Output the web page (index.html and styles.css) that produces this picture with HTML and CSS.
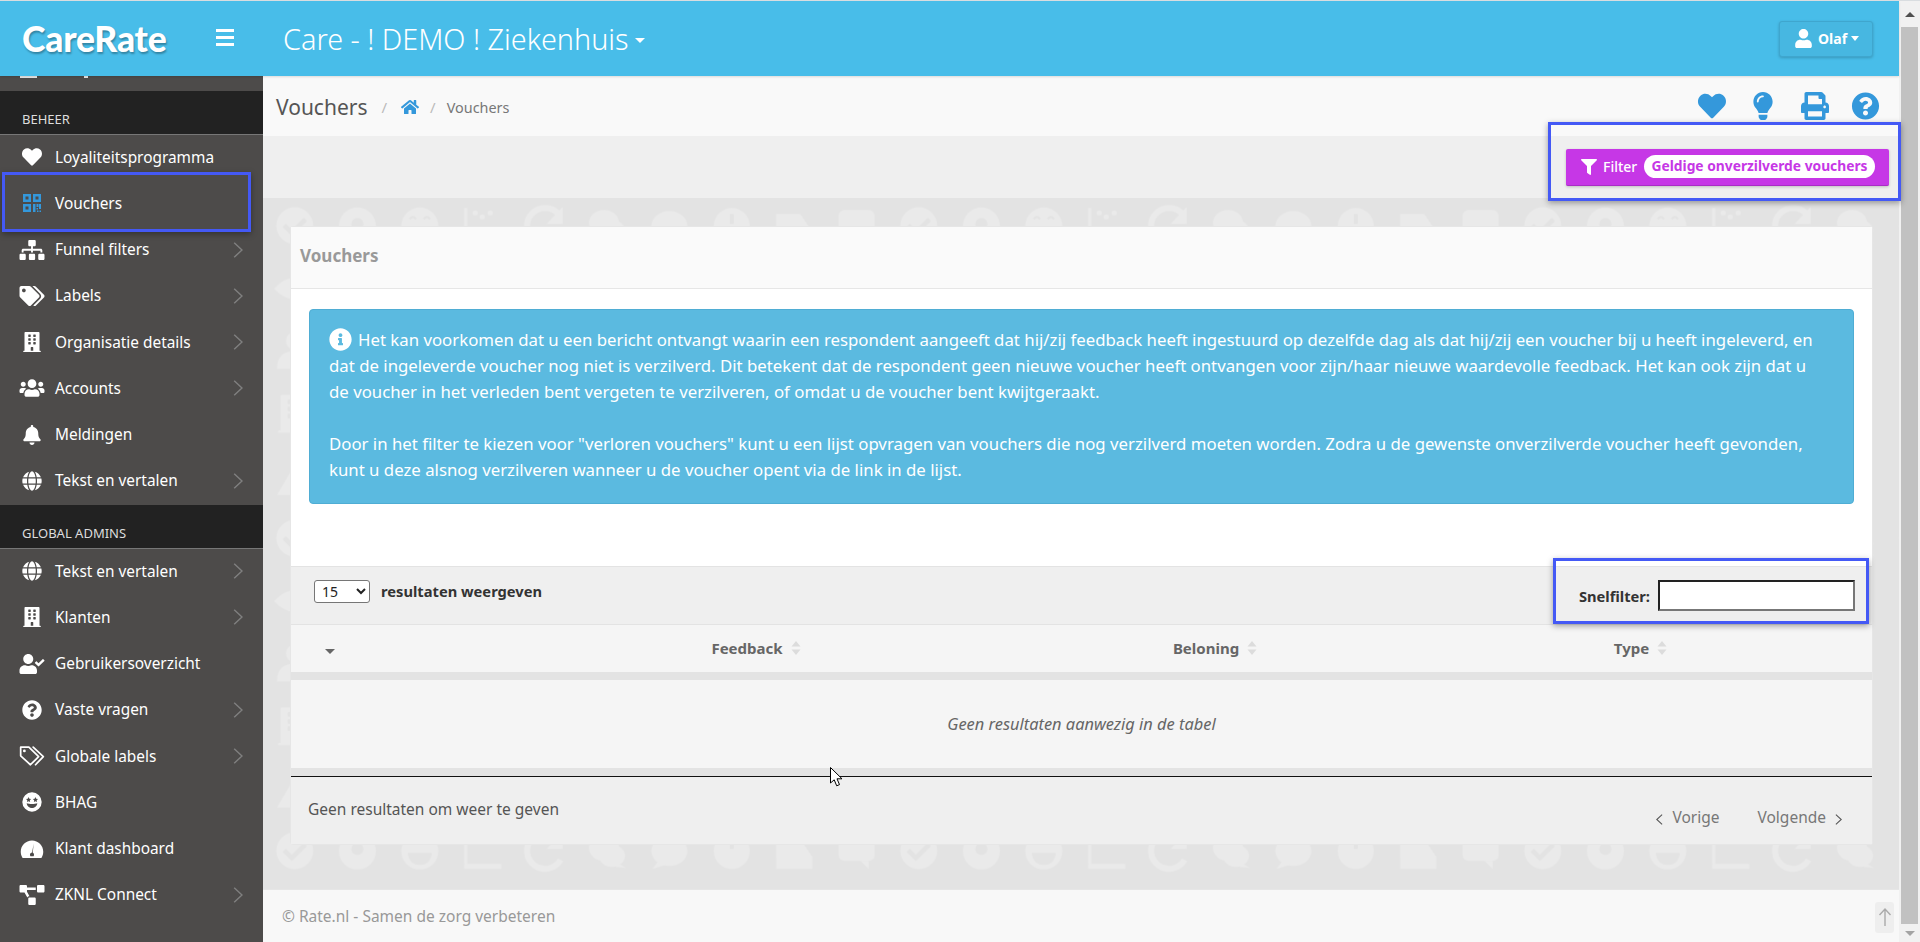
FILE: index.html
```html
<!DOCTYPE html>
<html lang="nl">
<head>
<meta charset="utf-8">
<title>Vouchers</title>
<link rel="stylesheet" href="styles.css">
</head>
<body>
<svg class="sprite" aria-hidden="true">
  <defs>
    <symbol id="i-heart" viewBox="0 0 512 512"><path d="M462.3 62.6C407.5 15.9 326 24.3 275.7 76.2L256 96.5l-19.7-20.3C186.1 24.3 104.5 15.9 49.7 62.6c-62.8 53.6-66.1 149.8-9.9 207.9l193.5 199.8c12.5 12.9 32.8 12.9 45.3 0l193.5-199.8c56.3-58.1 53-154.3-9.8-207.9z"/></symbol>
    <symbol id="i-user" viewBox="0 0 448 512"><path d="M224 256c70.7 0 128-57.3 128-128S294.7 0 224 0 96 57.3 96 128s57.3 128 128 128zm89.6 32h-16.7c-22.2 10.2-46.9 16-72.9 16s-50.6-5.8-72.9-16h-16.7C60.2 288 0 348.2 0 422.4V464c0 26.5 21.5 48 48 48h352c26.5 0 48-21.5 48-48v-41.6c0-74.2-60.2-134.4-134.4-134.4z"/></symbol>
    <symbol id="i-question" viewBox="0 0 512 512"><path d="M504 256c0 136.997-111.043 248-248 248S8 392.997 8 256C8 119.083 119.043 8 256 8s248 111.083 248 248zM262.655 90c-54.497 0-89.255 22.957-116.549 63.758-3.536 5.286-2.353 12.415 2.715 16.258l34.699 26.31c5.205 3.947 12.621 3.008 16.665-2.122 17.864-22.658 30.113-35.797 57.303-35.797 20.429 0 45.698 13.148 45.698 32.958 0 14.976-12.363 22.667-32.534 33.976C247.128 238.528 216 254.941 216 296v4c0 6.627 5.373 12 12 12h56c6.627 0 12-5.373 12-12v-1.333c0-28.462 83.186-29.647 83.186-106.667 0-58.002-60.165-102-116.531-102zM256 338c-25.365 0-46 20.635-46 46 0 25.364 20.635 46 46 46s46-20.636 46-46c0-25.365-20.635-46-46-46z"/></symbol>
    <symbol id="i-filter" viewBox="0 0 512 512"><path d="M487.976 0H24.028C2.71 0-8.047 25.866 7.058 40.971L192 225.941V432c0 7.831 3.821 15.17 10.237 19.662l80 55.98C298.02 518.69 320 507.493 320 487.98V225.941l184.947-184.97C520.021 25.896 509.338 0 487.976 0z"/></symbol>
    <symbol id="i-home" viewBox="0 0 576 512"><path d="M280.37 148.26L96 300.11V464a16 16 0 0 0 16 16l112.06-.29a16 16 0 0 0 15.92-16V368a16 16 0 0 1 16-16h64a16 16 0 0 1 16 16v95.64a16 16 0 0 0 16 16.05L464 480a16 16 0 0 0 16-16V300L295.67 148.26a12.19 12.19 0 0 0-15.3 0zM571.6 251.47L488 182.56V44.05a12 12 0 0 0-12-12h-56a12 12 0 0 0-12 12v72.61L318.47 43a48 48 0 0 0-61 0L4.34 251.47a12 12 0 0 0-1.6 16.9l25.5 31A12 12 0 0 0 45.15 301l235.22-193.74a12.19 12.19 0 0 1 15.3 0L530.9 301a12 12 0 0 0 16.9-1.6l25.5-31a12 12 0 0 0-1.7-16.93z"/></symbol>
    <symbol id="i-bulb" viewBox="0 0 352 512"><path d="M96.06 454.35c.01 6.29 1.87 12.45 5.36 17.69l17.09 25.69a31.99 31.99 0 0 0 26.64 14.28h61.71a31.99 31.99 0 0 0 26.64-14.28l17.09-25.69a31.989 31.989 0 0 0 5.36-17.69l.04-38.35H96.01l.05 38.35zM0 176c0 44.37 16.45 84.85 43.56 115.78 16.52 18.85 42.36 58.23 52.21 91.45.04.26.07.52.11.78h160.24c.04-.26.07-.51.11-.78 9.85-33.22 35.69-72.6 52.21-91.45C335.55 260.85 352 220.37 352 176 352 78.61 272.91-.3 175.45 0 73.44.31 0 82.97 0 176zm176-80c-44.11 0-80 35.89-80 80 0 8.84-7.16 16-16 16s-16-7.16-16-16c0-61.76 50.24-112 112-112 8.84 0 16 7.16 16 16s-7.16 16-16 16z"/></symbol>
    <symbol id="i-print" viewBox="0 0 512 512"><path d="M448 192V77.25c0-8.49-3.37-16.62-9.37-22.63L393.37 9.37c-6-6-14.14-9.37-22.63-9.37H96C78.33 0 64 14.33 64 32v160c-35.35 0-64 28.65-64 64v112c0 8.84 7.16 16 16 16h48v96c0 17.67 14.33 32 32 32h320c17.67 0 32-14.33 32-32v-96h48c8.84 0 16-7.16 16-16V256c0-35.35-28.65-64-64-64zm-64 256H128v-96h256v96zm0-224H128V64h192v48c0 8.84 7.16 16 16 16h48v96zm48 72c-13.25 0-24-10.75-24-24 0-13.26 10.75-24 24-24s24 10.74 24 24c0 13.25-10.75 24-24 24z"/></symbol>
    <symbol id="i-sitemap" viewBox="0 0 640 512"><path d="M128 352H32c-17.67 0-32 14.33-32 32v96c0 17.67 14.33 32 32 32h96c17.67 0 32-14.33 32-32v-96c0-17.67-14.33-32-32-32zm-24-80h192v48h48v-48h192v48h48v-57.59c0-21.17-17.23-38.41-38.41-38.41H344v-64h40c17.67 0 32-14.33 32-32V32c0-17.67-14.33-32-32-32H256c-17.67 0-32 14.33-32 32v96c0 17.67 14.33 32 32 32h40v64H94.41C73.23 224 56 241.23 56 262.41V320h48v-48zm264 80h-96c-17.67 0-32 14.33-32 32v96c0 17.67 14.33 32 32 32h96c17.67 0 32-14.33 32-32v-96c0-17.67-14.33-32-32-32zm240 0h-96c-17.67 0-32 14.33-32 32v96c0 17.67 14.33 32 32 32h96c17.67 0 32-14.33 32-32v-96c0-17.67-14.33-32-32-32z"/></symbol>
    <symbol id="i-tags" viewBox="0 0 640 512"><path d="M497.941 225.941L286.059 14.059A48 48 0 0 0 252.118 0H48C21.49 0 0 21.49 0 48v204.118a48 48 0 0 0 14.059 33.941l211.882 211.882c18.744 18.745 49.136 18.746 67.882 0l204.118-204.118c18.745-18.745 18.745-49.137 0-67.882zM112 160c-26.51 0-48-21.49-48-48s21.49-48 48-48 48 21.49 48 48-21.49 48-48 48zm513.941 133.823L421.823 497.941c-18.745 18.745-49.137 18.745-67.882 0l-.36-.36L527.64 323.522c16.999-16.999 26.36-39.6 26.36-63.64s-9.362-46.641-26.36-63.64L331.397 0h48.721a48 48 0 0 1 33.941 14.059l211.882 211.882c18.745 18.745 18.745 49.137 0 67.882z"/></symbol>
    <symbol id="i-tags-o" viewBox="0 0 640 512"><path fill="none" stroke="#fff" stroke-width="44" stroke-linejoin="round" d="M30 30h210l250 240-210 210L30 250z"/><circle cx="125" cy="125" r="36"/><path fill="none" stroke="#fff" stroke-width="44" stroke-linejoin="round" stroke-linecap="round" d="M350 30l260 240-200 210"/></symbol>
    <symbol id="i-building" viewBox="0 0 448 512"><path d="M436 480h-20V24c0-13.255-10.745-24-24-24H56C42.745 0 32 10.745 32 24v456H12c-6.627 0-12 5.373-12 12v20h448v-20c0-6.627-5.373-12-12-12zM128 76c0-6.627 5.373-12 12-12h40c6.627 0 12 5.373 12 12v40c0 6.627-5.373 12-12 12h-40c-6.627 0-12-5.373-12-12V76zm0 96c0-6.627 5.373-12 12-12h40c6.627 0 12 5.373 12 12v40c0 6.627-5.373 12-12 12h-40c-6.627 0-12-5.373-12-12v-40zm52 148h-40c-6.627 0-12-5.373-12-12v-40c0-6.627 5.373-12 12-12h40c6.627 0 12 5.373 12 12v40c0 6.627-5.373 12-12 12zm76 160h-64v-84c0-6.627 5.373-12 12-12h40c6.627 0 12 5.373 12 12v84zm64-172c0 6.627-5.373 12-12 12h-40c-6.627 0-12-5.373-12-12v-40c0-6.627 5.373-12 12-12h40c6.627 0 12 5.373 12 12v40zm0-96c0 6.627-5.373 12-12 12h-40c-6.627 0-12-5.373-12-12v-40c0-6.627 5.373-12 12-12h40c6.627 0 12 5.373 12 12v40zm0-96c0 6.627-5.373 12-12 12h-40c-6.627 0-12-5.373-12-12V76c0-6.627 5.373-12 12-12h40c6.627 0 12 5.373 12 12v40z"/></symbol>
    <symbol id="i-users" viewBox="0 0 640 512"><path d="M96 224c35.3 0 64-28.7 64-64s-28.7-64-64-64-64 28.7-64 64 28.7 64 64 64zm448 0c35.3 0 64-28.7 64-64s-28.7-64-64-64-64 28.7-64 64 28.7 64 64 64zm32 32h-64c-17.6 0-33.5 7.1-45.1 18.6 40.3 22.1 68.9 62 75.1 109.4h66c17.7 0 32-14.3 32-32v-32c0-35.3-28.7-64-64-64zm-256 0c61.9 0 112-50.1 112-112S381.9 32 320 32 208 82.1 208 144s50.1 112 112 112zm76.8 32h-8.3c-20.8 10-43.9 16-68.5 16s-47.6-6-68.5-16h-8.3C179.6 288 128 339.6 128 403.2V432c0 26.5 21.5 48 48 48h288c26.5 0 48-21.5 48-48v-28.8c0-63.6-51.6-115.2-115.2-115.2zm-223.7-13.4C161.5 263.1 145.6 256 128 256H64c-35.3 0-64 28.7-64 64v32c0 17.7 14.3 32 32 32h65.9c6.3-47.4 34.9-87.3 75.2-109.4z"/></symbol>
    <symbol id="i-bell" viewBox="0 0 448 512"><path d="M224 512c35.32 0 63.97-28.65 63.97-64H160.03c0 35.35 28.65 64 63.97 64zm215.39-149.71c-19.32-20.76-55.47-51.99-55.47-154.29 0-77.7-54.48-139.9-127.94-155.16V32c0-17.67-14.32-32-31.98-32s-31.98 14.33-31.98 32v20.84C118.56 68.1 64.08 130.3 64.08 208c0 102.3-36.15 133.53-55.47 154.29-6 6.45-8.66 14.16-8.61 21.71.11 16.4 12.98 32 32.1 32h383.8c19.12 0 32-15.6 32.1-32 .05-7.55-2.61-15.27-8.61-21.71z"/></symbol>
    <symbol id="i-globe" viewBox="0 0 496 512"><path d="M336.5 160C322 70.7 287.8 8 248 8s-74 62.7-88.5 152h177zM152 256c0 22.2 1.2 43.5 3.3 64h185.3c2.1-20.5 3.3-41.8 3.3-64s-1.2-43.5-3.3-64H155.3c-2.1 20.5-3.3 41.8-3.3 64zm324.7-96c-28.6-67.9-86.5-120.4-158-141.6 24.4 33.8 41.2 84.7 50 141.6h108zM177.2 18.4C105.8 39.6 47.8 92.1 19.3 160h108c8.7-56.9 25.5-107.8 49.9-141.6zM487.4 192H372.7c2.1 21 3.3 42.5 3.3 64s-1.2 43-3.3 64h114.6c5.5-20.5 8.6-41.8 8.6-64s-3.1-43.5-8.5-64zM120 256c0-21.5 1.2-43 3.3-64H8.6C3.2 212.5 0 233.8 0 256s3.2 43.5 8.6 64h114.6c-2-21-3.2-42.5-3.2-64zm39.5 96c14.5 89.3 48.7 152 88.5 152s74-62.7 88.5-152h-177zm159.3 141.6c71.4-21.2 129.4-73.7 158-141.6h-108c-8.8 56.9-25.6 107.8-50 141.6zM19.3 352c28.6 67.9 86.5 120.4 158 141.6-24.4-33.8-41.2-84.7-50-141.6h-108z"/></symbol>
    <symbol id="i-usercheck" viewBox="0 0 640 512"><path d="M224 256c70.7 0 128-57.3 128-128S294.7 0 224 0 96 57.3 96 128s57.3 128 128 128zm89.6 32h-16.7c-22.2 10.2-46.9 16-72.9 16s-50.6-5.8-72.9-16h-16.7C60.2 288 0 348.2 0 422.4V464c0 26.5 21.5 48 48 48h352c26.5 0 48-21.5 48-48v-41.6c0-74.2-60.2-134.4-134.4-134.4zm323-128.4l-27.8-28.1c-4.6-4.7-12.1-4.7-16.8-.1l-104.8 104-45.5-45.8c-4.6-4.7-12.1-4.7-16.8-.1l-28.1 27.9c-4.7 4.6-4.7 12.1-.1 16.8l81.7 82.3c4.6 4.7 12.1 4.7 16.8.1l141.3-140.2c4.6-4.7 4.7-12.2.1-16.8z"/></symbol>
    <symbol id="i-info" viewBox="0 0 512 512"><path d="M256 8C119.043 8 8 119.083 8 256c0 136.997 111.043 248 248 248s248-111.003 248-248C504 119.083 392.957 8 256 8zm0 110c23.196 0 42 18.804 42 42s-18.804 42-42 42-42-18.804-42-42 18.804-42 42-42zm56 254c0 6.627-5.373 12-12 12h-88c-6.627 0-12-5.373-12-12v-24c0-6.627 5.373-12 12-12h12v-64h-12c-6.627 0-12-5.373-12-12v-24c0-6.627 5.373-12 12-12h64c6.627 0 12 5.373 12 12v100h12c6.627 0 12 5.373 12 12v24z"/></symbol>
    <symbol id="i-diagram" viewBox="0 0 640 512"><path d="M384 320H256c-17.67 0-32 14.33-32 32v128c0 17.67 14.33 32 32 32h128c17.67 0 32-14.33 32-32V352c0-17.67-14.33-32-32-32zM192 32c0-17.67-14.33-32-32-32H32C14.33 0 0 14.33 0 32v128c0 17.67 14.33 32 32 32h95.72l73.16 128.04C211.98 300.98 232.4 288 256 288h.28L192 175.51V128h224V64H192V32zM608 0H480c-17.67 0-32 14.33-32 32v128c0 17.67 14.33 32 32 32h128c17.67 0 32-14.33 32-32V32c0-17.67-14.33-32-32-32z"/></symbol>
    <symbol id="i-check" viewBox="0 0 512 512"><path d="M504 256c0 136.967-111.033 248-248 248S8 392.967 8 256 119.033 8 256 8s248 111.033 248 248zM227.314 387.314l184-184c6.248-6.248 6.248-16.379 0-22.627l-22.627-22.627c-6.248-6.249-16.379-6.249-22.628 0L216 308.118l-70.059-70.059c-6.248-6.248-16.379-6.248-22.628 0l-22.627 22.627c-6.248 6.248-6.248 16.379 0 22.627l104 104c6.249 6.249 16.379 6.249 22.628.001z"/></symbol>
    <symbol id="i-stars" viewBox="0 0 512 512"><path fill-rule="evenodd" d="M256 8a248 248 0 1 0 0 496 248 248 0 0 0 0-496zM120 290c60 26 212 26 272 0-6 78-70 122-136 122s-130-44-136-122zM168 130l20 42 46 6-34 32 8 46-40-22-40 22 8-46-34-32 46-6zM344 130l20 42 46 6-34 32 8 46-40-22-40 22 8-46-34-32 46-6z"/></symbol>
    <symbol id="i-gauge" viewBox="0 0 576 512"><path fill-rule="evenodd" d="M288 40C129 40 0 169 0 328c0 53 14 102 39 144 6 10 16 16 28 16h442c12 0 22-6 28-16 25-42 39-91 39-144C576 169 447 40 288 40zM330 120l-22 230c20 10 32 30 32 52 0 14-4 27-12 38H248c-8-11-12-24-12-38 0-30 24-54 54-56z"/></symbol>
    <symbol id="i-qr" viewBox="0 0 18 18"><path fill-rule="evenodd" d="M0 0h8v8H0zM2.500 2.500v3h3v-3zM10 0h8v8h-8zM12.500 2.500v3h3v-3zM0 10h8v8H0zM2.500 12.500v3h3v-3zM10 10h2.500v8H10zM13.500 10h2v3h-2zM16 10h2v5h-2zM13.500 14H15v1.500h-1.500zM14 16.500h1.500V18H14zM16.500 16.500H18V18h-1.500z"/></symbol>
    <symbol id="i-chev" viewBox="0 0 10 16"><path fill="none" stroke="currentColor" stroke-width="1.5" d="M1.200 .8 9 8l-7.800 7.200"/></symbol>
    <symbol id="i-sort" viewBox="0 0 10 14"><path d="M5 0l4.500 5.400H.5zM5 14 .5 8.600h9z"/></symbol>
  </defs>
</svg>

<div class="window">
  <div class="page">
    <header class="topbar">
      <div class="brand"><span class="logo">CareRate</span></div>
      <span class="burger" aria-hidden="true"><i></i><i></i><i></i></span>
      <h1 class="org">Care - ! DEMO ! Ziekenhuis<span class="caret caret-org"></span></h1>
      <button class="user-btn" type="button"><svg class="ico-user"><use href="#i-user"/></svg>Olaf<span class="caret caret-user"></span></button>
    </header>
    <div class="below">
      <nav class="sidebar">
        <div class="peek"><i class="peek-a"></i><i class="peek-b"></i></div>
        <div class="side-title">BEHEER</div>
        <a class="item"><span class="ic"><svg class="w22"><use href="#i-heart"/></svg></span>Loyaliteitsprogramma</a>
        <a class="item"><span class="ic blue"><svg class="w18"><use href="#i-qr"/></svg></span>Vouchers</a>
        <a class="item"><span class="ic"><svg class="w26"><use href="#i-sitemap"/></svg></span>Funnel filters<svg class="chev"><use href="#i-chev"/></svg></a>
        <a class="item"><span class="ic"><svg class="w26"><use href="#i-tags"/></svg></span>Labels<svg class="chev"><use href="#i-chev"/></svg></a>
        <a class="item"><span class="ic"><svg class="w18"><use href="#i-building"/></svg></span>Organisatie details<svg class="chev"><use href="#i-chev"/></svg></a>
        <a class="item"><span class="ic"><svg class="w26"><use href="#i-users"/></svg></span>Accounts<svg class="chev"><use href="#i-chev"/></svg></a>
        <a class="item"><span class="ic"><svg class="w18"><use href="#i-bell"/></svg></span>Meldingen</a>
        <a class="item"><span class="ic"><svg class="w20"><use href="#i-globe"/></svg></span>Tekst en vertalen<svg class="chev"><use href="#i-chev"/></svg></a>
        <div class="side-title">GLOBAL ADMINS</div>
        <a class="item"><span class="ic"><svg class="w20"><use href="#i-globe"/></svg></span>Tekst en vertalen<svg class="chev"><use href="#i-chev"/></svg></a>
        <a class="item"><span class="ic"><svg class="w18"><use href="#i-building"/></svg></span>Klanten<svg class="chev"><use href="#i-chev"/></svg></a>
        <a class="item"><span class="ic"><svg class="w26"><use href="#i-usercheck"/></svg></span>Gebruikersoverzicht</a>
        <a class="item"><span class="ic"><svg class="w20"><use href="#i-question"/></svg></span>Vaste vragen<svg class="chev"><use href="#i-chev"/></svg></a>
        <a class="item"><span class="ic"><svg class="w26"><use href="#i-tags-o"/></svg></span>Globale labels<svg class="chev"><use href="#i-chev"/></svg></a>
        <a class="item"><span class="ic"><svg class="w20"><use href="#i-stars"/></svg></span>BHAG</a>
        <a class="item"><span class="ic"><svg class="w24"><use href="#i-gauge"/></svg></span>Klant dashboard</a>
        <a class="item"><span class="ic"><svg class="w26"><use href="#i-diagram"/></svg></span>ZKNL Connect<svg class="chev"><use href="#i-chev"/></svg></a>
      </nav>
      <main class="main">
        <div class="crumbs">
          <h2 class="crumb-title">Vouchers</h2>
          <span class="sep">/</span>
          <svg class="ico-home"><use href="#i-home"/></svg>
          <span class="sep sep-b">/</span>
          <span class="crumb-cur">Vouchers</span>
          <div class="tools">
            <svg class="t-heart"><use href="#i-heart"/></svg>
            <svg class="t-bulb"><use href="#i-bulb"/></svg>
            <svg class="t-print"><use href="#i-print"/></svg>
            <svg class="t-help"><use href="#i-question"/></svg>
          </div>
        </div>
        <div class="filterbar">
          <button class="filter-btn" type="button"><svg class="ico-filter"><use href="#i-filter"/></svg>Filter<span class="pill">Geldige onverzilverde vouchers</span></button>
        </div>
        <div class="content">
          <svg class="wall" aria-hidden="true">
            <defs>
              <pattern id="wall" x="0.8" y="-4.25" width="624" height="312.5" patternUnits="userSpaceOnUse">
                <g fill="#eaeaea">
                  <use href="#i-check" x="12" y="12" width="38" height="38"/>
                  <g transform="translate(93.6 31.25)"><circle r="18.5"/><circle cy="-2" r="6" fill="#e3e3e3"/></g>
                  <g transform="translate(156 31.25)"><circle r="18.5"/><path d="M-12 2h24c-1 9-6 12-12 12s-11-3-12-12z" fill="#e3e3e3"/><path d="M-10-7q3-4 6 0M4-7q3-4 6 0" fill="none" stroke="#e3e3e3" stroke-width="2"/></g>
                  <g transform="translate(218.4 31.25)"><path d="M-18-18h3v31h34v5h-37z"/><circle cx="-7" cy="-13" r="2.500"/><circle cx="0" cy="-9" r="2.500"/><circle cx="8" cy="-13" r="2.500"/></g>
                  <g transform="translate(280.8 31.25)"><path d="M14-12A18 18 0 1 0 16 9" fill="none" stroke="#eaeaea" stroke-width="6"/><path d="M18-19v17H2z"/></g>
                  <g transform="translate(343.2 31.25)"><ellipse cx="-3" cy="-3" rx="15" ry="13"/><ellipse cx="5" cy="5" rx="13" ry="11"/><path d="M10 12l9 5-10-1z"/></g>
                  <g transform="translate(405.6 31.25)"><ellipse rx="18" ry="15"/><path d="M-11 10l-6 8 13-4z"/></g>
                  <g transform="translate(468 31.25)"><circle r="18"/><path d="M-2-12h4v10h-4z" fill="#e3e3e3"/></g>
                  <g transform="translate(530.4 31.25)"><path d="M-18 18V-12h24l12 18v12z"/></g>
                  <g transform="translate(592.8 31.25)"><rect x="-18" y="-16" width="36" height="26" rx="6"/><path d="M4 10l8 8v-8z"/></g>
                  <g transform="translate(31.2 93.75)"><path d="M-21 0q21-22 42 0q-21 22-42 0z"/></g>
                  <g transform="translate(31.2 156.25)"><circle cy="-10" r="9"/><path d="M-18 18q0-18 18-18t18 18z"/></g>
                  <use href="#i-building" x="13" y="200" width="36" height="38"/>
                  <g transform="translate(31.2 281.25)"><path d="M-4-19h8v14l14 24h-36l14-24z"/></g>
                </g>
              </pattern>
            </defs>
            <rect class="wall-fill" fill="url(#wall)"/>
          </svg>
          <section class="card">
            <div class="card-head">Vouchers</div>
            <div class="card-body">
              <div class="alert">
                <p><svg class="ico-info"><use href="#i-info"/></svg>Het kan voorkomen dat u een bericht ontvangt waarin een respondent aangeeft dat hij/zij feedback heeft ingestuurd op dezelfde dag als dat hij/zij een voucher bij u heeft ingeleverd, en<br>dat de ingeleverde voucher nog niet is verzilverd. Dit betekent dat de respondent geen nieuwe voucher heeft ontvangen voor zijn/haar nieuwe waardevolle feedback. Het kan ook zijn dat u<br>de voucher in het verleden bent vergeten te verzilveren, of omdat u de voucher bent kwijtgeraakt.</p>
                <p>Door in het filter te kiezen voor "verloren vouchers" kunt u een lijst opvragen van vouchers die nog verzilverd moeten worden. Zodra u de gewenste onverzilverde voucher heeft gevonden,<br>kunt u deze alsnog verzilveren wanneer u de voucher opent via de link in de lijst.</p>
              </div>
            </div>
            <div class="tbl-tools">
              <label class="len"><select class="len-sel"><option>15</option></select>resultaten weergeven</label>
              <label class="quick">Snelfilter:<input class="quick-in" type="text"></label>
            </div>
            <div class="thead">
              <div class="th th-first"><span class="caret caret-th"></span></div>
              <div class="th">Feedback<svg class="sort"><use href="#i-sort"/></svg></div>
              <div class="th">Beloning<svg class="sort"><use href="#i-sort"/></svg></div>
              <div class="th">Type<svg class="sort"><use href="#i-sort"/></svg></div>
            </div>
            <div class="band"></div>
            <div class="empty">Geen resultaten aanwezig in de tabel</div>
            <div class="band band-end"></div>
            <div class="tbl-foot">
              <span class="tbl-info">Geen resultaten om weer te geven</span>
              <div class="pager">
                <span class="pg"><svg class="pg-chev flip"><use href="#i-chev"/></svg>Vorige</span>
                <span class="pg">Volgende<svg class="pg-chev"><use href="#i-chev"/></svg></span>
              </div>
            </div>
          </section>
        </div>
        <footer class="foot">
          <span>© Rate.nl - Samen de zorg verbeteren</span>
          <span class="totop" aria-hidden="true"><svg viewBox="0 0 14 20"><path fill="none" stroke="#aaa" stroke-width="1.4" d="M7 19V2M1.500 8 7 2l5.500 6"/></svg></span>
        </footer>
      </main>
    </div>
  </div>
  <div class="scroll" aria-hidden="true">
    <span class="s-up"></span>
    <span class="s-thumb"></span>
    <span class="s-down"></span>
  </div>
</div>

<div class="mark mark-a"></div>
<div class="mark mark-b"></div>
<div class="mark mark-c"></div>
<svg class="cursor" viewBox="0 0 13 20" aria-hidden="true"><path d="M.5.5v15.500l3.700-3.200 2.500 6 2.800-1.200-2.500-5.800h5z" fill="#fff" stroke="#000"/></svg>
</body>
</html>
```
FILE: styles.css
```css
* { box-sizing: border-box; }
html, body { margin: 0; height: 100%; overflow: hidden; }
body { font-family: "Noto Sans", "Open Sans", sans-serif; font-size: 14px; color: #333; background: #e3e3e3; border-top: 1px solid #d9dde0; }
.sprite { position: absolute; width: 0; height: 0; }
svg { fill: currentColor; display: block; }
.window { display: flex; height: 941px; }
.page { width: 1899px; display: flex; flex-direction: column; min-width: 0; }

/* top bar */
.topbar { height: 75px; flex: none; background: #48bde9; display: flex; align-items: center; color: #fff; box-shadow: 0 1px 2px rgba(0,0,0,.12); position: relative; z-index: 3; }
.brand { width: 216px; padding-left: 22px; }
.logo { font-family: Lato, sans-serif; font-weight: 900; font-size: 35.5px; letter-spacing: -.2px; text-shadow: 1px 2px 2px rgba(0,0,0,.3); line-height: 1; }
.burger { width: 18px; display: flex; flex-direction: column; gap: 4px; margin-top: -3px; }
.burger i { height: 3px; background: #fff; display: block; }
.org { margin: 0 0 0 49px; font-weight: 300; font-size: 28.8px; font-family: "Noto Sans", sans-serif; flex: 1; display: flex; align-items: center; }
.caret { display: inline-block; width: 0; height: 0; border-left: 4px solid transparent; border-right: 4px solid transparent; border-top: 5px solid #fff; }
.caret-org { margin-left: 6px; margin-top: 3px; border-left-width: 5px; border-right-width: 5px; }
.user-btn { width: 94px; height: 36px; margin-right: 26px; background: #47b7e1; border: 1px solid #3fa6ce; border-radius: 3px; color: #fff; font: 700 14px "Noto Sans", sans-serif; display: flex; align-items: center; padding: 0 0 0 15px; box-shadow: 0 1px 3px rgba(0,0,0,.2); }
.ico-user { width: 17px; height: 19px; margin-right: 6px; }
.caret-user { margin-left: 4px; }

/* sidebar */
.below { flex: 1; display: flex; min-height: 0; }
.sidebar { width: 263px; flex: none; background: #4d4b4a; color: #fff; overflow: hidden; }
.peek { height: 15px; position: relative; }
.peek i { position: absolute; top: 0; background: #e8e8e8; display: block; height: 2px; }
.peek-a { left: 20px; width: 17px; }
.peek-b { left: 84px; width: 4px; }
.side-title { height: 44px; background: #222; border-bottom: 1px solid #777; padding: 20px 0 0 22px; font-size: 13px; line-height: 16px; color: #ddd; }
.item { height: 46.25px; display: flex; align-items: center; font-size: 15.4px; color: #fff; position: relative; padding-bottom: 2px; }
.ic { width: 46px; margin-left: 9px; flex: none; display: flex; justify-content: center; }
.ic svg { height: 20px; }
.w18 { width: 18px; }
.w20 { width: 20px; }
.w22 { width: 22px; }
.w24 { width: 24px; }
.w26 { width: 26px; }
.blue { color: #3498db; }
.chev { width: 10px; height: 16px; margin-left: auto; margin-right: 20px; color: #7f7f7f; }

/* main */
.main { flex: 1; display: flex; flex-direction: column; min-width: 0; }
.crumbs { height: 60px; flex: none; background: #f9f9f9; display: flex; align-items: center; padding: 2px 19px 0 13px; color: #777; }
.crumb-title { margin: 0; font-weight: 400; font-size: 21px; color: #555; }
.sep { margin: 0 14px; color: #bbb; font-size: 15px; }
.sep-b { margin: 0 11px; }
.ico-home { width: 18px; height: 16px; color: #3498db; }
.crumb-cur { font-size: 14.4px; color: #777; }
.tools { margin-left: auto; margin-top: -2px; display: flex; align-items: center; color: #3498db; }
.tools svg { height: 28px; }
.t-heart { width: 30px; }
.t-bulb { width: 20px; margin-left: 26px; }
.t-print { width: 28px; margin-left: 28px; }
.t-help { width: 29px; margin-left: 22px; }
.filterbar { height: 63px; flex: none; background: #efefef; border-bottom: 1px solid #e3e3e3; display: flex; align-items: center; justify-content: flex-end; padding-right: 10px; }
.filter-btn { width: 323px; height: 37px; background: #c637e6; border: 0; border-bottom: 1px solid #a92ec5; border-radius: 2px; color: #fff; font: 500 14px "Noto Sans", sans-serif; display: flex; align-items: center; padding: 0 14px 0 15px; box-shadow: 0 1px 3px rgba(0,0,0,.2); }
.ico-filter { width: 16px; height: 16px; margin-right: 6px; }
.pill { margin-left: auto; width: 231px; height: 23px; border-radius: 12px; background: #fff; color: #c637e6; font-weight: 700; font-size: 13.8px; line-height: 22px; text-align: center; white-space: nowrap; }

.content { flex: 1; position: relative; padding: 27px 26px 44px 27px; background: #e3e3e3; min-height: 0; display: flex; }
.wall { position: absolute; left: 0; top: 0; width: 100%; height: 100%; }
.wall-fill { width: 100%; height: 100%; }
.card { position: relative; flex: 1; display: flex; flex-direction: column; background: #fff; border: 1px solid #e6e6e6; border-radius: 3px; }
.card-head { height: 62px; flex: none; background: #fafafa; border-bottom: 1px solid #e6e6e6; font-weight: 700; font-size: 17px; line-height: 58px; padding-left: 9px; color: #999; }
.card-body { height: 277px; flex: none; padding: 20px 18px 0; background: #fff; }
.alert { height: 195px; background: #5bbae0; border: 1px solid #4fadd4; border-radius: 4px; padding: 17px 19px; color: #fff; font-size: 16.8px; line-height: 26px; white-space: nowrap; }
.alert p { margin: 0 0 26px; }
.alert p:last-child { margin: 0; }
.ico-info { display: inline-block; width: 23px; height: 23px; vertical-align: -5px; margin-right: 6px; }

.tbl-tools { height: 59px; flex: none; background: #efefef; border-top: 1px solid #e3e3e3; border-bottom: 1px solid #e3e3e3; display: flex; align-items: center; justify-content: space-between; padding: 0 17px 0 23px; }
.len, .quick { display: flex; align-items: center; font-weight: 700; font-size: 14.7px; color: #333; }
.len { margin-top: -9px; }
.len-sel { width: 56px; height: 23px; margin-right: 11px; background: #fff; border: 1px solid #767676; border-radius: 3px; font: 400 14px "Noto Sans", sans-serif; color: #222; padding: 0 0 0 3px; }
.quick-in { width: 197px; height: 31px; margin-left: 8px; background: #fff; border-style: solid; border-width: 2px; border-color: #222 #777 #777 #222; }
.thead { height: 47px; flex: none; display: grid; grid-template-columns: 200px 530px 388px 1fr; background: #f5f5f5; padding-bottom: 1px; }
.th { display: flex; align-items: center; justify-content: center; font-weight: 700; font-size: 15px; color: #666; }
.th-first { justify-content: flex-start; padding-left: 34px; }
.caret-th { border-top-color: #666; border-left-width: 5px; border-right-width: 5px; margin-top: 6px; }
.sort { width: 10px; height: 14px; margin-left: 8px; color: #dcdcdc; }
.band { height: 8px; flex: none; background: #e3e3e3; }
.empty { height: 88px; flex: none; background: #f5f5f5; display: flex; align-items: center; justify-content: center; font-style: italic; font-size: 16.4px; color: #666; padding-bottom: 1px; }
.band-end { height: 9px; border-bottom: 1px solid #111; }
.tbl-foot { flex: 1; background: #efefef; display: flex; justify-content: space-between; padding: 0 30px 0 17px; color: #555; font-size: 15.5px; }
.tbl-info { margin-top: 21px; line-height: 22px; }
.pager { display: flex; gap: 38px; margin-top: 29px; color: #777; }
.pg { display: flex; align-items: center; height: 22px; gap: 9px; }
.pg-chev { width: 7px; height: 11px; color: #555; margin-top: 4px; }
.pg-chev.flip { transform: scaleX(-1); }
.foot { height: 53px; flex: none; background: #f8f8f8; border-top: 1px solid #e6e6e6; display: flex; align-items: center; justify-content: space-between; padding: 0 5px 0 19px; color: #999; font-size: 15.5px; }
.totop { width: 19px; height: 31px; background: #eee; border-radius: 3px; display: flex; align-items: center; justify-content: center; margin-top: 2px; }
.totop svg { width: 14px; height: 20px; }

/* page scrollbar */
.scroll { width: 21px; flex: none; background: #f1f1f1; display: flex; flex-direction: column; align-items: center; }
.s-up, .s-down { height: 26px; flex: none; display: flex; align-items: center; justify-content: center; width: 100%; }
.s-up::before, .s-down::before { content: ""; width: 0; height: 0; border-left: 5px solid transparent; border-right: 5px solid transparent; }
.s-up::before { border-bottom: 5px solid #505050; }
.s-down { height: 18px; }
.s-down::before { border-top: 5px solid #a3a3a3; }
.s-thumb { flex: 1; width: 17px; background: #c1c1c1; }

/* annotation boxes and pointer, on top of the page */
.mark { position: absolute; border: 3px solid #4459f5; box-shadow: 0 2px 6px rgba(0,0,0,.35); pointer-events: none; }
.mark-a { left: 2px; top: 172px; width: 249px; height: 60px; }
.mark-b { left: 1548px; top: 122px; width: 353px; height: 79px; }
.mark-c { left: 1553px; top: 558px; width: 316px; height: 66px; }
.cursor { position: absolute; left: 830px; top: 767px; width: 13px; height: 20px; }
```
